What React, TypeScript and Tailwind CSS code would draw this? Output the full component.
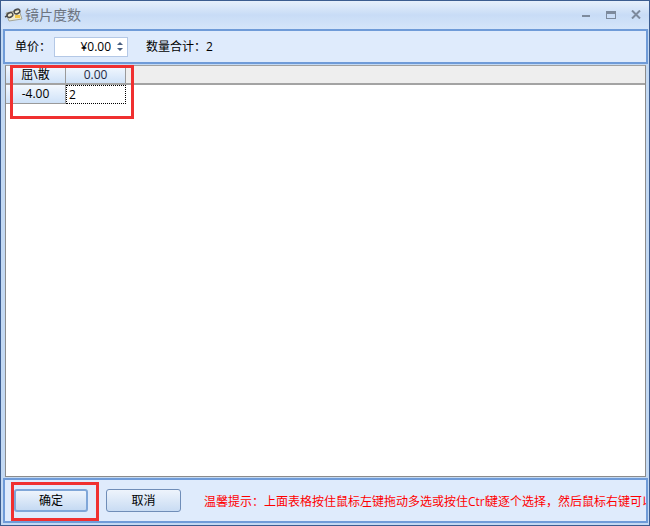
import React from "react";

const font = { fontFamily: '"Open Sans", "Noto Sans CJK SC", sans-serif' };

function Glasses() {
  return (
    <svg width="20" height="16" viewBox="0 0 20 16">
      <path d="M2 6 L15 3 L18 12 L5 14 Z" fill="#f1ecd0" stroke="#a5a596" strokeWidth="1" />
      <rect x="11" y="8" width="5" height="3" fill="#f2c84b" />
      <ellipse cx="6" cy="8" rx="3" ry="2.2" fill="none" stroke="#4a4a4a" strokeWidth="1.4" transform="rotate(-25 6 8)" />
      <ellipse cx="13" cy="4.5" rx="3" ry="2.2" fill="none" stroke="#4a4a4a" strokeWidth="1.4" transform="rotate(-25 13 4.5)" />
      <path d="M3 9 L1 10" stroke="#4a4a4a" strokeWidth="1.4" />
    </svg>
  );
}

export default function App() {
  return (
    <div
      style={font}
      className="w-[650px] h-[526px] relative flex flex-col overflow-hidden border border-[#3b5c8f] bg-[#c3d9f3] text-[12px] text-black"
    >
      {/* title bar */}
      <div className="h-[28px] shrink-0 flex items-center pl-[3px] pb-[1px] bg-gradient-to-b from-[#e6effb] via-[#c8dcf6] to-[#d5e5fa]">
        <Glasses />
        <span className="ml-[1px] text-[14px] text-[#6d7480]">镜片度数</span>
        <div className="ml-auto flex items-center">
          <div className="w-[8px] h-[2px] bg-[#7d8a9c] mr-[16px] mt-[2px]" />
          <div className="w-[10px] h-[8px] border border-[#7d8a9c] border-t-[3px] mr-[15px]" />
          <svg width="10" height="9" viewBox="0 0 10 9" className="mr-[8px]">
            <path d="M1 0.5 L9 8.5 M9 0.5 L1 8.5" stroke="#7d8a9c" strokeWidth="2" />
          </svg>
        </div>
      </div>

      <div className="flex-1 flex flex-col pl-[2px] pr-[1px] pb-[2px] min-h-0">
        {/* price toolbar */}
        <div className="h-[35px] shrink-0 flex items-center pl-[10px] border-2 border-[#6f9bd8] bg-[#dfebfc]">
          <span>单价：</span>
          <div className="ml-[3px] w-[74px] h-[20px] bg-white border border-[#b4c8e6] flex items-center justify-end">
            <span>¥0.00</span>
            <div className="w-[12px] ml-[3px] mr-[1px] flex flex-col items-center gap-[3px]">
              <div className="w-0 h-0 border-x-[3px] border-x-transparent border-b-[3px] border-b-[#4a5f80]" />
              <div className="w-0 h-0 border-x-[3px] border-x-transparent border-t-[3px] border-t-[#4a5f80]" />
            </div>
          </div>
          <span className="ml-[18px]">数量合计：</span>
          <span>2</span>
        </div>

        {/* grid */}
        <div className="flex-1 min-h-0 mt-[1px] mx-[2px] border border-[#8c8c8c] border-t-[#a0a0a0] bg-white">
          <div className="h-[19px] flex bg-[#eeeeee] border-b-2 border-[#a3a3a3]">
            <div className="w-[60px] pt-[1px] flex items-center justify-center border-r border-[#9a9a9a] bg-gradient-to-b from-[#f3f8fe] to-[#cfe2f8]">屈\散</div>
            <div className="w-[60px] pt-[1px] flex items-center justify-center border-r border-[#9a9a9a] bg-gradient-to-b from-[#f3f8fe] to-[#cfe2f8] text-[#1f2a44]">0.00</div>
          </div>
          <div className="h-[19px] flex">
            <div className="w-[60px] flex items-center justify-center border-r border-b border-[#9a9a9a] bg-gradient-to-b from-[#f3f8fe] to-[#cfe2f8]">-4.00</div>
            <div className="w-[60px] flex items-center pl-[2px] border border-dotted border-black">2</div>
          </div>
        </div>

        {/* footer */}
        <div className="h-[45px] shrink-0 mt-[1px] flex items-center pl-[9px] border-2 border-[#6f9bd8] bg-[#dfebfc] overflow-hidden whitespace-nowrap">
          <button className="w-[74px] h-[23px] shrink-0 rounded-[3px] border-2 border-[#7fa6d8] bg-gradient-to-b from-[#eef4fc] to-[#c5daf3]">确定</button>
          <button className="w-[75px] h-[23px] shrink-0 ml-[18px] rounded-[3px] border border-[#6f8db8] bg-gradient-to-b from-[#eef4fc] to-[#c9dcf3]">取消</button>
          <span className="ml-[23px] mt-[3px] text-[#ff0000]">
            温馨提示：上面表格按住鼠标左键拖动多选或按住<span className="inline-block w-[18px]">Ctrl</span>键逐个选择，然后鼠标右键可以
          </span>
        </div>
      </div>

      {/* red annotation boxes */}
      <div className="absolute left-[9px] top-[64px] w-[124px] h-[54px] border-[3px] border-[#f03030]" />
      <div className="absolute left-[10px] top-[481px] w-[88px] h-[39px] border-[3px] border-[#f03030]" />
    </div>
  );
}
